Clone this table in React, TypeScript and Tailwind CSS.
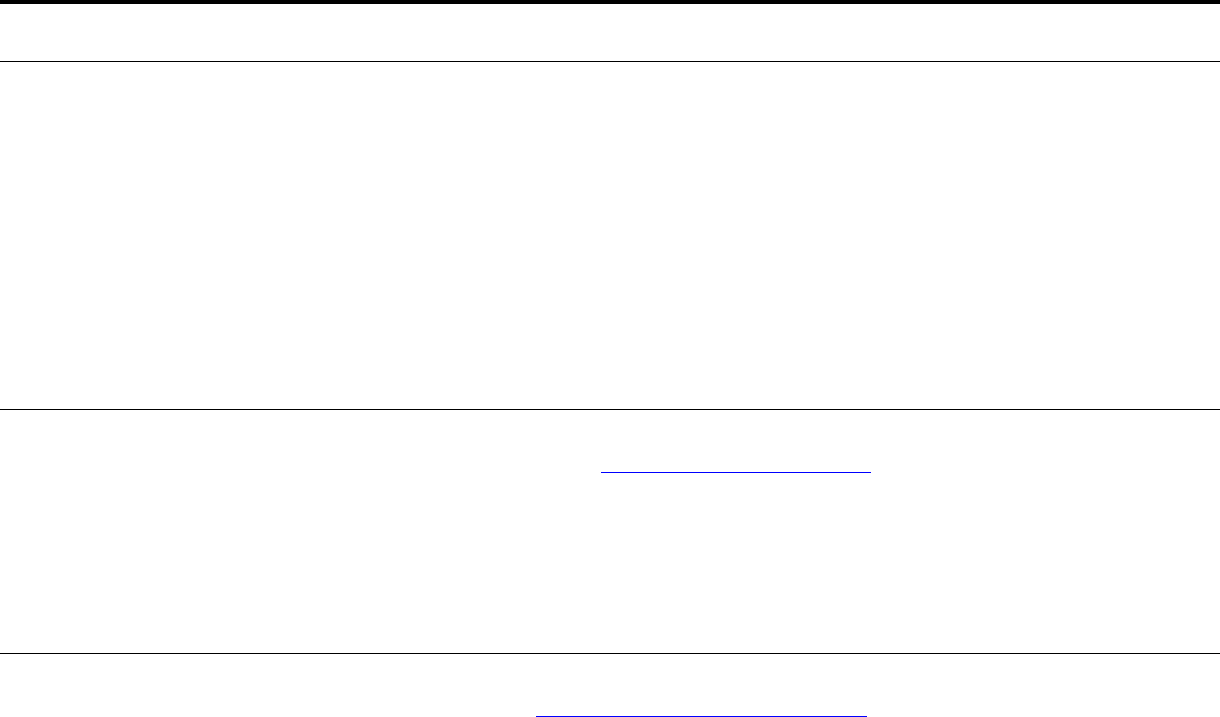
export default function App() {
  return (
    <div className="min-h-[717px] border-t-4 border-black bg-white font-['Liberation_Sans',sans-serif]">
      <header className="h-[57px]" />
      <div className="h-px bg-black" />

      <section className="h-[347px]" />
      <div className="h-px bg-black" />

      <section className="h-[243px] pt-[62px]">
        <a href="#" className="ml-[601px] block h-px w-[270px] bg-[#0000ff]" aria-label="link" />
      </section>
      <div className="h-px bg-black" />

      <section className="pt-[62px]">
        <a href="#" className="ml-[536px] block h-px w-[331px] bg-[#0000ff]" aria-label="link" />
      </section>
    </div>
  );
}
